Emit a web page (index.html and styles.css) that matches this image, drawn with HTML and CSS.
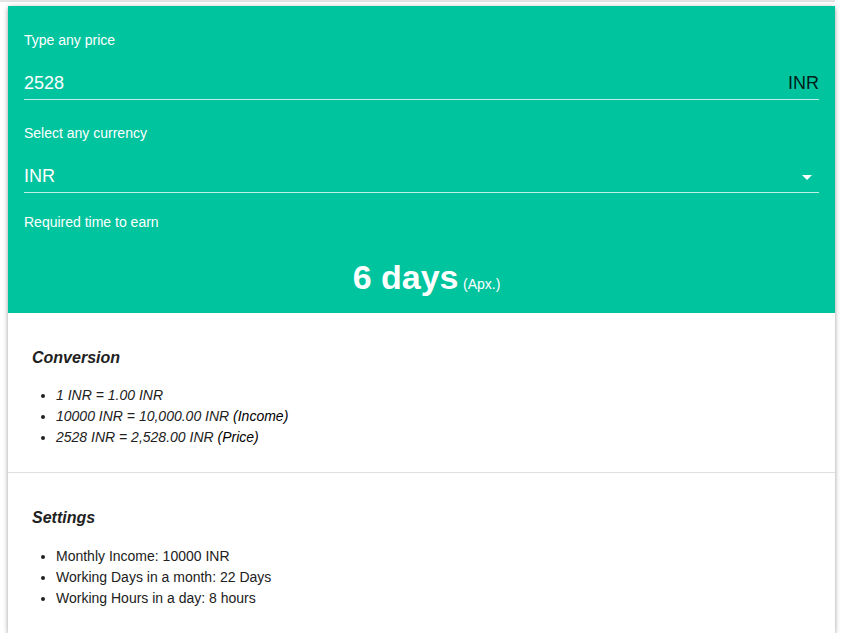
FILE: index.html
```html
<!DOCTYPE html>
<html>
<head>
<meta charset="utf-8">
<link rel="stylesheet" href="styles.css">
</head>
<body>
<div class="prev-edge"></div>
<div class="card">
  <div class="hero">
    <div class="label">Type any price</div>
    <div class="field">
      <span class="value">2528</span>
      <span class="suffix">INR</span>
    </div>
    <div class="label">Select any currency</div>
    <div class="field select">
      <span class="value">INR</span>
      <svg class="arrow" width="24" height="24" viewBox="0 0 24 24"><path d="M7 10l5 5 5-5z" fill="#fff"/></svg>
    </div>
    <div class="label">Required time to earn</div>
    <div class="result"><span class="big">6 days</span> <span class="small">(Apx.)</span></div>
  </div>
  <div class="section">
    <h3>Conversion</h3>
    <ul class="italic">
      <li>1 INR = 1.00 INR</li>
      <li>10000 INR = 10,000.00 INR <span class="upright">(Income)</span></li>
      <li>2528 INR = 2,528.00 INR <span class="upright">(Price)</span></li>
    </ul>
  </div>
  <div class="section bordered">
    <h3>Settings</h3>
    <ul>
      <li>Monthly Income: 10000 INR</li>
      <li>Working Days in a month: 22 Days</li>
      <li>Working Hours in a day: 8 hours</li>
    </ul>
  </div>
</div>
</body>
</html>
```
FILE: styles.css
```css
html, body {
  margin: 0;
  padding: 0;
  background: #fff;
}
body {
  padding: 0 8px 0 8px;
  font-family: "Liberation Sans", Arial, sans-serif;
}
.prev-edge {
  height: 2px;
  margin: 0 0 4px -8px;
  background: #e3e3e3;
}
.card {
  background: #fff;
  box-shadow: 0 2px 4px rgba(0,0,0,0.3), 0 0 6px rgba(0,0,0,0.12);
}
.hero {
  background: #00c49e;
  padding: 24px 16px 16px 16px;
}
.label {
  color: #fff;
  font-size: 14px;
  line-height: 20px;
}
.label + .field { margin-top: 18px; }
.field {
  display: flex;
  align-items: center;
  justify-content: space-between;
  border-bottom: 1px solid rgba(255,255,255,0.75);
  height: 31px;
  margin-bottom: 23px;
  font-size: 18px;
}
.field .value { color: #fff; }
.field .suffix { color: rgba(0,0,0,0.87); }
.select { margin-bottom: 19px; }
.result {
  text-align: center;
  margin-top: 26px;
  padding-left: 10px;
  color: #fff;
}
.big {
  font-size: 34px;
  font-weight: bold;
}
.small { font-size: 14px; }
.section {
  padding: 24px 24px 24px 24px;
  color: #212121;
}
.section h3 {
  margin: 11px 0 0 0;
  font-size: 16px;
  font-style: italic;
  font-weight: bold;
  line-height: 20px;
}
.section ul {
  margin: 17px 0 0 0;
  padding-left: 24px;
  font-size: 14px;
  line-height: 21px;
}
.italic li { font-style: italic; }
.upright { color: #000; }
.bordered {
  border-top: 1px solid #e0e0e0;
  padding-top: 24px;
  padding-bottom: 24px;
}
.bordered ul { margin-top: 18px; }
```
